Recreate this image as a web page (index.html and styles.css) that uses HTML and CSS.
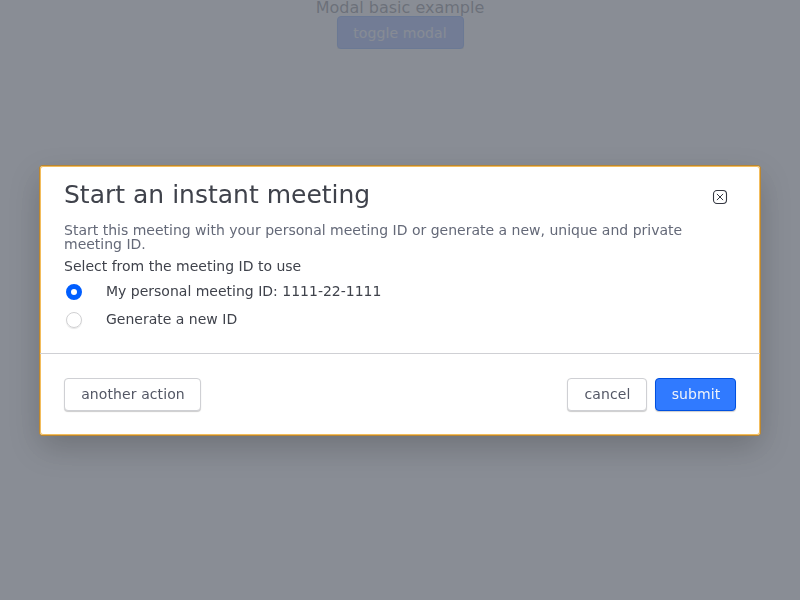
FILE: index.html
```html
<!DOCTYPE html>
<html lang="en">
<head>
<meta charset="utf-8">
<title>Modal basic example</title>
<link rel="stylesheet" href="styles.css">
</head>
<body>
<main class="page">
  <div>Modal basic example</div>
  <button class="btn toggle">toggle modal</button>
</main>
<div class="overlay">
  <section class="modal" role="dialog" aria-modal="true">
    <div class="body">
      <header class="header">
        <h1 class="title">Start an instant meeting</h1>
        <svg class="close" width="16" height="16" viewBox="0 0 16 16" fill="none" stroke="#343741">
          <rect x="1.5" y="1.5" width="13" height="13" rx="3.5" stroke-width="1.1"/>
          <path d="M4.9 4.9l6.2 6.2M11.1 4.9l-6.2 6.2"/>
        </svg>
      </header>
      <p class="description">Start this meeting with your personal meeting ID or generate a new, unique and private meeting ID.</p>
      <p class="legend">Select from the meeting ID to use</p>
      <label class="option"><span class="radio checked"></span>My personal meeting ID: 1111-22-1111</label>
      <label class="option"><span class="radio"></span>Generate a new ID</label>
    </div>
    <footer class="footer">
      <button class="btn first">another action</button>
      <button class="btn cancel">cancel</button>
      <button class="btn btn-primary">submit</button>
    </footer>
  </section>
</div>
</body>
</html>
```
FILE: styles.css
```css
* { box-sizing: border-box; }
body {
  margin: 0;
  font: 16px/16px "DejaVu Sans", sans-serif;
  color: #3f424b;
  background: #fff;
}
.page { text-align: center; color: #53575e; }
.btn {
  height: 33px;
  padding: 0 0 1px 1px;
  border: 1px solid #cfd0d4;
  border-radius: 4px;
  background: #fff;
  color: #535765;
  font: 14px/14px "DejaVu Sans", sans-serif;
  letter-spacing: 0.1px;
  box-shadow: 0 1px 1px rgba(0, 0, 0, 0.2);
}
.btn-primary {
  width: 81px;
  background: #307aff;
  border-color: #0050e0;
  color: #f0f3fa;
}
.toggle {
  width: 127px;
  padding: 1px 0 0;
  background: #759cff;
  border-color: #5088f8;
  color: #f0f3fa;
}
.first { width: 137px; margin-right: auto; }
.cancel { width: 80px; }
.overlay {
  position: fixed;
  inset: 0;
  display: flex;
  align-items: center;
  justify-content: center;
  padding-top: 1px;
  background: rgba(113, 118, 128, 0.83);
}
.modal {
  width: 720px;
  height: 269px;
  border-radius: 3px;
  background: #fff;
  box-shadow:
    inset 0 0 0 1px #f3bd5c,
    0 0 0 1px #bb8630,
    0 12px 32px rgba(0, 0, 0, 0.2);
}
.body {
  height: 188px;
  padding: 13px 24px 0;
  border-bottom: 1px solid #cfd0d4;
}
.header {
  display: flex;
  align-items: center;
  justify-content: space-between;
  padding-right: 8px;
}
.title {
  margin: 0;
  font-size: 25px;
  line-height: 32px;
  font-weight: 400;
}
.close { margin-top: 4px; }
.description, .legend {
  margin: 0;
  font-size: 14px;
  line-height: 14px;
}
.description { margin-top: 12px; color: #646978; }
.legend { margin: 8px 0 11px; }
.option {
  display: flex;
  align-items: center;
  height: 14px;
  margin-bottom: 14px;
  font-size: 14px;
  line-height: 14px;
}
.radio {
  flex: none;
  width: 16px;
  height: 16px;
  margin: 2px 24px 0 2px;
  border: 1px solid #d0d0d2;
  border-radius: 50%;
  box-shadow: 0 1px 1px rgba(0, 0, 0, 0.1);
}
.radio.checked { border: 5px solid #005eff; box-shadow: none; }
.footer {
  display: flex;
  gap: 8px;
  padding: 24px;
}
```
